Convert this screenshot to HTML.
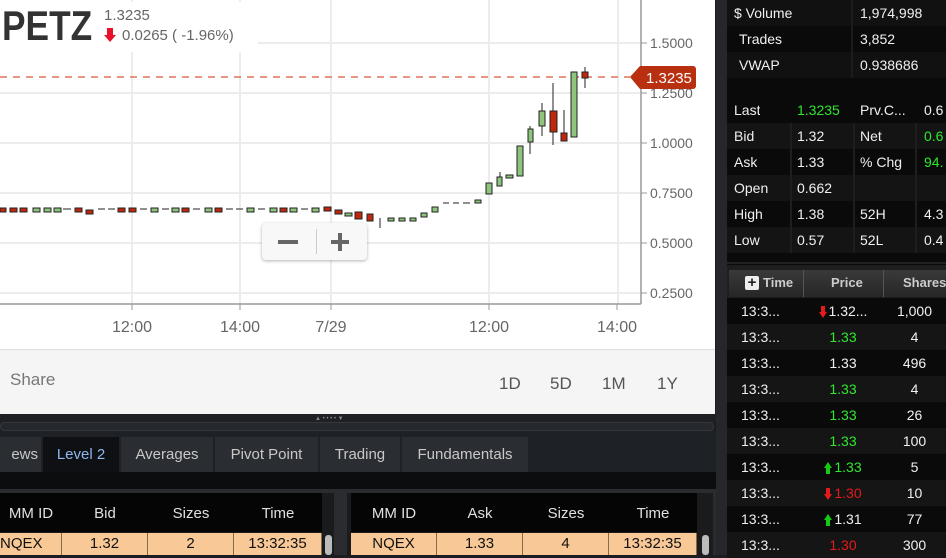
<!DOCTYPE html>
<html><head><meta charset="utf-8"><style>
*{margin:0;padding:0;box-sizing:border-box}
body{width:946px;height:555px;overflow:hidden;background:#1b1d20;font-family:"Liberation Sans",sans-serif;position:relative}
.abs{position:absolute}
.rp{position:absolute;left:727px;top:0;width:219px;height:555px;background:#0a0a0a;color:#f0f0f0;font-size:14px}
.cell{position:absolute;height:26px;line-height:26px;padding-left:7px;white-space:nowrap;overflow:hidden}
.g{color:#2ee82e}.r{color:#e51a1a}
.tab{position:absolute;top:437px;height:35px;line-height:36px;background:#2a2d31;color:#c8c8c8;font-size:15px;text-align:center;font-family:"Liberation Sans Narrow","Liberation Sans",sans-serif}
.th{position:absolute;top:493px;height:39px;line-height:42px;color:#e0e0e0;font-size:15px;text-align:center;background:#050505;font-family:"Liberation Sans Narrow","Liberation Sans",sans-serif}
.td{position:absolute;top:533px;height:22px;line-height:22px;background:#f8c896;color:#111;font-size:15px;text-align:center;border-right:1px solid #8a6a4a;font-family:"Liberation Sans Narrow","Liberation Sans",sans-serif}
.ar{display:inline-block;vertical-align:middle;margin-right:2px}
</style></head><body>
<div class="abs" style="left:0;top:0;width:715px;height:349px;background:#fff"></div>
<svg class="abs" style="left:0;top:0" width="716" height="349">
<g stroke="#ececec" stroke-width="2">
<line x1="0" y1="43" x2="640" y2="43"/><line x1="0" y1="93" x2="640" y2="93"/><line x1="0" y1="143" x2="640" y2="143"/><line x1="0" y1="193" x2="640" y2="193"/><line x1="0" y1="243" x2="640" y2="243"/><line x1="0" y1="293" x2="640" y2="293"/>
<line x1="132" y1="0" x2="132" y2="304"/><line x1="240" y1="0" x2="240" y2="304"/><line x1="331" y1="0" x2="331" y2="304"/><line x1="489" y1="0" x2="489" y2="304"/><line x1="618" y1="0" x2="618" y2="304"/>
</g>
<line x1="641" y1="0" x2="641" y2="304" stroke="#999" stroke-width="1.5"/>
<line x1="0" y1="304" x2="641" y2="304" stroke="#999" stroke-width="1.5"/>
<g stroke="#999"><line x1="132" y1="304" x2="132" y2="310"/><line x1="240" y1="304" x2="240" y2="310"/><line x1="331" y1="304" x2="331" y2="310"/><line x1="489" y1="304" x2="489" y2="310"/><line x1="617" y1="304" x2="617" y2="310"/>
<line x1="641" y1="43" x2="647" y2="43"/><line x1="641" y1="93" x2="647" y2="93"/><line x1="641" y1="143" x2="647" y2="143"/><line x1="641" y1="193" x2="647" y2="193"/><line x1="641" y1="243" x2="647" y2="243"/><line x1="641" y1="293" x2="647" y2="293"/></g>
<g font-size="14" fill="#666" font-family="Liberation Sans"><text x="650" y="48">1.5000</text><text x="650" y="98">1.2500</text><text x="650" y="148">1.0000</text><text x="650" y="198">0.7500</text><text x="650" y="248">0.5000</text><text x="650" y="298">0.2500</text>
<text x="132" y="332" text-anchor="middle" font-size="16">12:00</text><text x="240" y="332" text-anchor="middle" font-size="16">14:00</text><text x="331" y="332" text-anchor="middle" font-size="16">7/29</text><text x="489" y="332" text-anchor="middle" font-size="16">12:00</text><text x="617" y="332" text-anchor="middle" font-size="16">14:00</text></g>
<line x1="0" y1="77" x2="630" y2="77" stroke="#d9583a" stroke-width="1.3" stroke-dasharray="7,6"/>
<g stroke="#222" stroke-width="1">
<g fill="#c0280e"><rect x="0" y="208" width="6" height="4"/><rect x="10" y="208" width="7" height="4"/><rect x="20" y="208" width="7" height="4"/><rect x="75" y="208" width="7" height="4"/><rect x="86" y="210" width="7" height="4"/><rect x="118" y="208" width="7" height="4"/><rect x="129" y="208" width="7" height="4"/><rect x="182" y="208" width="7" height="4"/><rect x="215" y="208" width="7" height="4"/><rect x="280" y="208" width="7" height="4"/><rect x="324" y="207" width="7" height="4"/><rect x="335" y="210" width="7" height="4"/><rect x="355" y="212" width="7" height="7"/><rect x="367" y="214" width="6" height="7"/><rect x="550" y="111" width="7" height="21"/><rect x="561" y="133" width="6" height="8"/><rect x="582" y="72" width="6" height="6"/></g>
<g fill="#8ec47c"><rect x="33" y="208" width="7" height="4"/><rect x="44" y="208" width="7" height="4"/><rect x="54" y="208" width="7" height="4"/><rect x="151" y="208" width="7" height="4"/><rect x="172" y="208" width="7" height="4"/><rect x="205" y="208" width="7" height="4"/><rect x="247" y="208" width="7" height="4"/><rect x="270" y="208" width="7" height="4"/><rect x="290" y="208" width="7" height="4"/><rect x="312" y="208" width="7" height="4"/><rect x="345" y="213" width="7" height="3"/><rect x="388" y="218" width="6" height="3"/><rect x="399" y="218" width="6" height="3"/><rect x="410" y="218" width="6" height="3"/><rect x="421" y="213" width="6" height="4"/><rect x="432" y="207" width="6" height="5"/><rect x="475" y="200" width="6" height="3"/><rect x="486" y="183" width="6" height="11"/><rect x="497" y="177" width="5" height="9"/><rect x="506" y="175" width="7" height="3"/><rect x="517" y="146" width="6" height="30"/><rect x="528" y="129" width="5" height="13"/><rect x="539" y="111" width="6" height="15"/><rect x="571" y="72" width="6" height="65"/></g>
<line x1="380" y1="218" x2="380" y2="228"/><line x1="500" y1="172" x2="500" y2="177"/><line x1="530" y1="126" x2="530" y2="129"/><line x1="530" y1="142" x2="530" y2="154"/><line x1="542" y1="103" x2="542" y2="111"/><line x1="542" y1="126" x2="542" y2="136"/><line x1="553" y1="83" x2="553" y2="111"/><line x1="553" y1="132" x2="553" y2="145"/><line x1="564" y1="110" x2="564" y2="133"/><line x1="585" y1="67" x2="585" y2="72"/><line x1="585" y1="78" x2="585" y2="88"/>
<line x1="63" y1="209" x2="71" y2="209"/><line x1="98" y1="209" x2="105" y2="209"/><line x1="108" y1="209" x2="115" y2="209"/><line x1="140" y1="209" x2="147" y2="209"/><line x1="162" y1="209" x2="169" y2="209"/><line x1="193" y1="209" x2="200" y2="209"/><line x1="226" y1="209" x2="233" y2="209"/><line x1="236" y1="209" x2="243" y2="209"/><line x1="258" y1="209" x2="265" y2="209"/><line x1="301" y1="209" x2="308" y2="209"/><line x1="443" y1="203" x2="449" y2="203"/><line x1="453" y1="203" x2="459" y2="203"/><line x1="463" y1="203" x2="470" y2="203"/>
</g>
<path d="M630 77 L640 66 H693 a3 3 0 0 1 3 3 V86 a3 3 0 0 1 -3 3 H640 Z" fill="#b8300f"/>
<text x="646" y="83" fill="#fff" font-size="15" font-family="Liberation Sans">1.3235</text>
</svg>
<div class="abs" style="left:0;top:2px;width:258px;height:50px;background:#fff"></div>
<div class="abs" style="left:2px;top:1px;font-size:42px;font-weight:bold;color:#333;transform:scaleX(0.84);transform-origin:0 0;line-height:50px">PETZ</div>
<div class="abs" style="left:104px;top:7px;font-size:15px;color:#666">1.3235</div>
<svg class="abs" style="left:104px;top:28px" width="12" height="14"><path d="M3 0h6v7h3l-6 7l-6-7h3z" fill="#e8102a"/></svg>
<div class="abs" style="left:122px;top:27px;font-size:15px;color:#666">0.0265 ( -1.96%)</div>
<div class="abs" style="left:262px;top:223px;width:105px;height:37px;background:#f8f8f8;border-radius:4px;box-shadow:0 1px 3px rgba(0,0,0,.3)"></div>
<div class="abs" style="left:278px;top:240px;width:20px;height:4px;background:#666"></div>
<div class="abs" style="left:316px;top:229px;width:1px;height:25px;background:#ccc"></div>
<div class="abs" style="left:331px;top:240px;width:18px;height:4px;background:#666"></div>
<div class="abs" style="left:338px;top:233px;width:4px;height:18px;background:#666"></div>
<div class="abs" style="left:0;top:349px;width:715px;height:65px;background:#f5f5f5;border-top:1px solid #ddd"></div>
<div class="abs" style="left:10px;top:370px;font-size:17px;color:#777">Share</div>
<div class="abs" style="left:499px;top:374px;font-size:17px;color:#555">1D</div>
<div class="abs" style="left:550px;top:374px;font-size:17px;color:#555">5D</div>
<div class="abs" style="left:602px;top:374px;font-size:17px;color:#555">1M</div>
<div class="abs" style="left:657px;top:374px;font-size:17px;color:#555">1Y</div>
<div class="abs" style="left:0;top:414px;width:716px;height:8px;background:#1e2023"></div>
<div class="abs" style="left:0;top:422px;width:714px;height:9px;background:#25282c;border:1px solid #34373b;border-radius:4px"></div>
<div class="abs" style="left:315px;top:416px;font-size:6px;color:#888">▲ • • • • ▼</div>
<div class="abs" style="left:0;top:431px;width:716px;height:41px;background:#1e2125"></div>
<div class="tab" style="left:0;width:41px;text-align:right;padding-right:3px">ews</div>
<div class="tab" style="left:43px;width:76px;background:#0e1013;color:#8fb8ec">Level 2</div>
<div class="tab" style="left:121px;width:92px">Averages</div>
<div class="tab" style="left:215px;width:103px">Pivot Point</div>
<div class="tab" style="left:320px;width:80px">Trading</div>
<div class="tab" style="left:402px;width:126px">Fundamentals</div>
<div class="abs" style="left:0;top:472px;width:716px;height:17px;background:#0c0d0f"></div>
<div class="abs" style="left:0;top:489px;width:716px;height:66px;background:#2a2c2f"></div>
<div class="abs" style="left:0;top:493px;width:334px;height:62px;background:#1a1b1d"></div>
<div class="abs" style="left:347px;top:493px;width:366px;height:62px;background:#1a1b1d"></div>
<div class="th" style="left:0;width:62px">MM ID</div><div class="th" style="left:62px;width:86px">Bid</div><div class="th" style="left:148px;width:86px">Sizes</div><div class="th" style="left:234px;width:88px">Time</div>
<div class="th" style="left:351px;width:86px">MM ID</div><div class="th" style="left:437px;width:86px">Ask</div><div class="th" style="left:523px;width:86px">Sizes</div><div class="th" style="left:609px;width:88px">Time</div>
<div class="td" style="left:0;width:62px;text-align:left">NQEX</div><div class="td" style="left:62px;width:86px">1.32</div><div class="td" style="left:148px;width:86px">2</div><div class="td" style="left:234px;width:88px">13:32:35</div>
<div class="td" style="left:351px;width:86px">NQEX</div><div class="td" style="left:437px;width:86px">1.33</div><div class="td" style="left:523px;width:86px">4</div><div class="td" style="left:609px;width:88px">13:32:35</div>
<div class="abs" style="left:325px;top:535px;width:7px;height:20px;background:#bbb;border-radius:3px"></div>
<div class="abs" style="left:702px;top:535px;width:7px;height:20px;background:#bbb;border-radius:3px"></div>
<div class="abs" style="left:716px;top:0;width:11px;height:555px;background:#25272a"></div>
<div class="rp">
<div class="abs" style="left:0;top:0;width:219px;height:78px;background:#111"></div>
<div class="abs" style="left:0;top:26px;width:219px;height:26px;background:#0a0a0a"></div>
<div class="abs" style="left:124px;top:0;width:2px;height:78px;background:#1c1c1c"></div>
<div class="cell" style="left:0;top:0">$ Volume</div><div class="cell" style="left:126px;top:0">1,974,998</div>
<div class="cell" style="left:5px;top:26px">Trades</div><div class="cell" style="left:126px;top:26px">3,852</div>
<div class="cell" style="left:5px;top:52px">VWAP</div><div class="cell" style="left:126px;top:52px">0.938686</div>
<div class="abs" style="left:0;top:123px;width:219px;height:26px;background:#141414"></div>
<div class="abs" style="left:0;top:175px;width:219px;height:26px;background:#141414"></div>
<div class="abs" style="left:0;top:227px;width:219px;height:26px;background:#141414"></div>
<div class="abs" style="left:63px;top:123px;width:2px;height:130px;background:#1e1e1e"></div>
<div class="abs" style="left:126px;top:123px;width:2px;height:130px;background:#1e1e1e"></div>
<div class="abs" style="left:188px;top:123px;width:2px;height:130px;background:#1e1e1e"></div>
<div class="cell" style="left:0;top:97px">Last</div><div class="cell g" style="left:63px;top:97px">1.3235</div><div class="cell" style="left:126px;top:97px">Prv.C...</div><div class="cell" style="left:190px;top:97px">0.6</div>
<div class="cell" style="left:0;top:123px">Bid</div><div class="cell" style="left:63px;top:123px">1.32</div><div class="cell" style="left:126px;top:123px">Net</div><div class="cell g" style="left:190px;top:123px">0.6</div>
<div class="cell" style="left:0;top:149px">Ask</div><div class="cell" style="left:63px;top:149px">1.33</div><div class="cell" style="left:126px;top:149px">% Chg</div><div class="cell g" style="left:190px;top:149px">94.</div>
<div class="cell" style="left:0;top:175px">Open</div><div class="cell" style="left:63px;top:175px">0.662</div>
<div class="cell" style="left:0;top:201px">High</div><div class="cell" style="left:63px;top:201px">1.38</div><div class="cell" style="left:126px;top:201px">52H</div><div class="cell" style="left:190px;top:201px">4.3</div>
<div class="cell" style="left:0;top:227px">Low</div><div class="cell" style="left:63px;top:227px">0.57</div><div class="cell" style="left:126px;top:227px">52L</div><div class="cell" style="left:190px;top:227px">0.4</div>
<div class="abs" style="left:0;top:262px;width:219px;height:2px;background:#222"></div>
<div class="abs" style="left:0;top:265px;width:219px;height:33px;background:#1e1e1e"></div>
<div class="abs" style="left:2px;top:270px;width:217px;height:27px;background:linear-gradient(#3a3a3a,#262626)"></div>
<div class="abs" style="left:76px;top:270px;width:1px;height:27px;background:#555"></div><div class="abs" style="left:156px;top:270px;width:1px;height:27px;background:#555"></div>
<div class="abs" style="left:18px;top:276px;width:14px;height:14px;background:#eee;border-radius:2px;color:#222;font-size:15px;font-weight:bold;line-height:14px;text-align:center">+</div>
<div class="abs" style="left:36px;top:275px;font-size:13px;font-weight:bold;color:#ccc">Time</div>
<div class="abs" style="left:104px;top:275px;font-size:13px;font-weight:bold;color:#ccc">Price</div>
<div class="abs" style="left:176px;top:275px;font-size:13px;font-weight:bold;color:#ccc">Shares</div>
</div>
<div class="abs" style="left:727px;top:298px;width:219px;height:257px;font-size:14px;color:#f0f0f0">
<div style="height:26px;display:flex;background:#0a0a0a"><div style="width:76px;padding-left:14px;line-height:26px">13:3...</div><div style="width:80px;text-align:center;line-height:26px"><svg class="ar" width="8" height="12"><path d="M2 0h4v6h2l-4 6l-4-6h2z" fill="#e51a1a"/></svg>1.32...</div><div style="width:63px;text-align:center;line-height:26px">1,000</div></div>
<div style="height:26px;display:flex;background:#151515"><div style="width:76px;padding-left:14px;line-height:26px">13:3...</div><div class="g" style="width:80px;text-align:center;line-height:26px">1.33</div><div style="width:63px;text-align:center;line-height:26px">4</div></div>
<div style="height:26px;display:flex;background:#0a0a0a"><div style="width:76px;padding-left:14px;line-height:26px">13:3...</div><div style="width:80px;text-align:center;line-height:26px">1.33</div><div style="width:63px;text-align:center;line-height:26px">496</div></div>
<div style="height:26px;display:flex;background:#151515"><div style="width:76px;padding-left:14px;line-height:26px">13:3...</div><div class="g" style="width:80px;text-align:center;line-height:26px">1.33</div><div style="width:63px;text-align:center;line-height:26px">4</div></div>
<div style="height:26px;display:flex;background:#0a0a0a"><div style="width:76px;padding-left:14px;line-height:26px">13:3...</div><div class="g" style="width:80px;text-align:center;line-height:26px">1.33</div><div style="width:63px;text-align:center;line-height:26px">26</div></div>
<div style="height:26px;display:flex;background:#151515"><div style="width:76px;padding-left:14px;line-height:26px">13:3...</div><div class="g" style="width:80px;text-align:center;line-height:26px">1.33</div><div style="width:63px;text-align:center;line-height:26px">100</div></div>
<div style="height:26px;display:flex;background:#0a0a0a"><div style="width:76px;padding-left:14px;line-height:26px">13:3...</div><div class="g" style="width:80px;text-align:center;line-height:26px"><svg class="ar" width="8" height="12"><path d="M2 12h4v-6h2l-4-6l-4 6h2z" fill="#1c1"/></svg>1.33</div><div style="width:63px;text-align:center;line-height:26px">5</div></div>
<div style="height:26px;display:flex;background:#151515"><div style="width:76px;padding-left:14px;line-height:26px">13:3...</div><div class="r" style="width:80px;text-align:center;line-height:26px"><svg class="ar" width="8" height="12"><path d="M2 0h4v6h2l-4 6l-4-6h2z" fill="#e51a1a"/></svg>1.30</div><div style="width:63px;text-align:center;line-height:26px">10</div></div>
<div style="height:26px;display:flex;background:#0a0a0a"><div style="width:76px;padding-left:14px;line-height:26px">13:3...</div><div style="width:80px;text-align:center;line-height:26px"><svg class="ar" width="8" height="12"><path d="M2 12h4v-6h2l-4-6l-4 6h2z" fill="#1c1"/></svg>1.31</div><div style="width:63px;text-align:center;line-height:26px">77</div></div>
<div style="height:26px;display:flex;background:#151515"><div style="width:76px;padding-left:14px;line-height:26px">13:3...</div><div class="r" style="width:80px;text-align:center;line-height:26px">1.30</div><div style="width:63px;text-align:center;line-height:26px">300</div></div>
</div>
</body></html>
